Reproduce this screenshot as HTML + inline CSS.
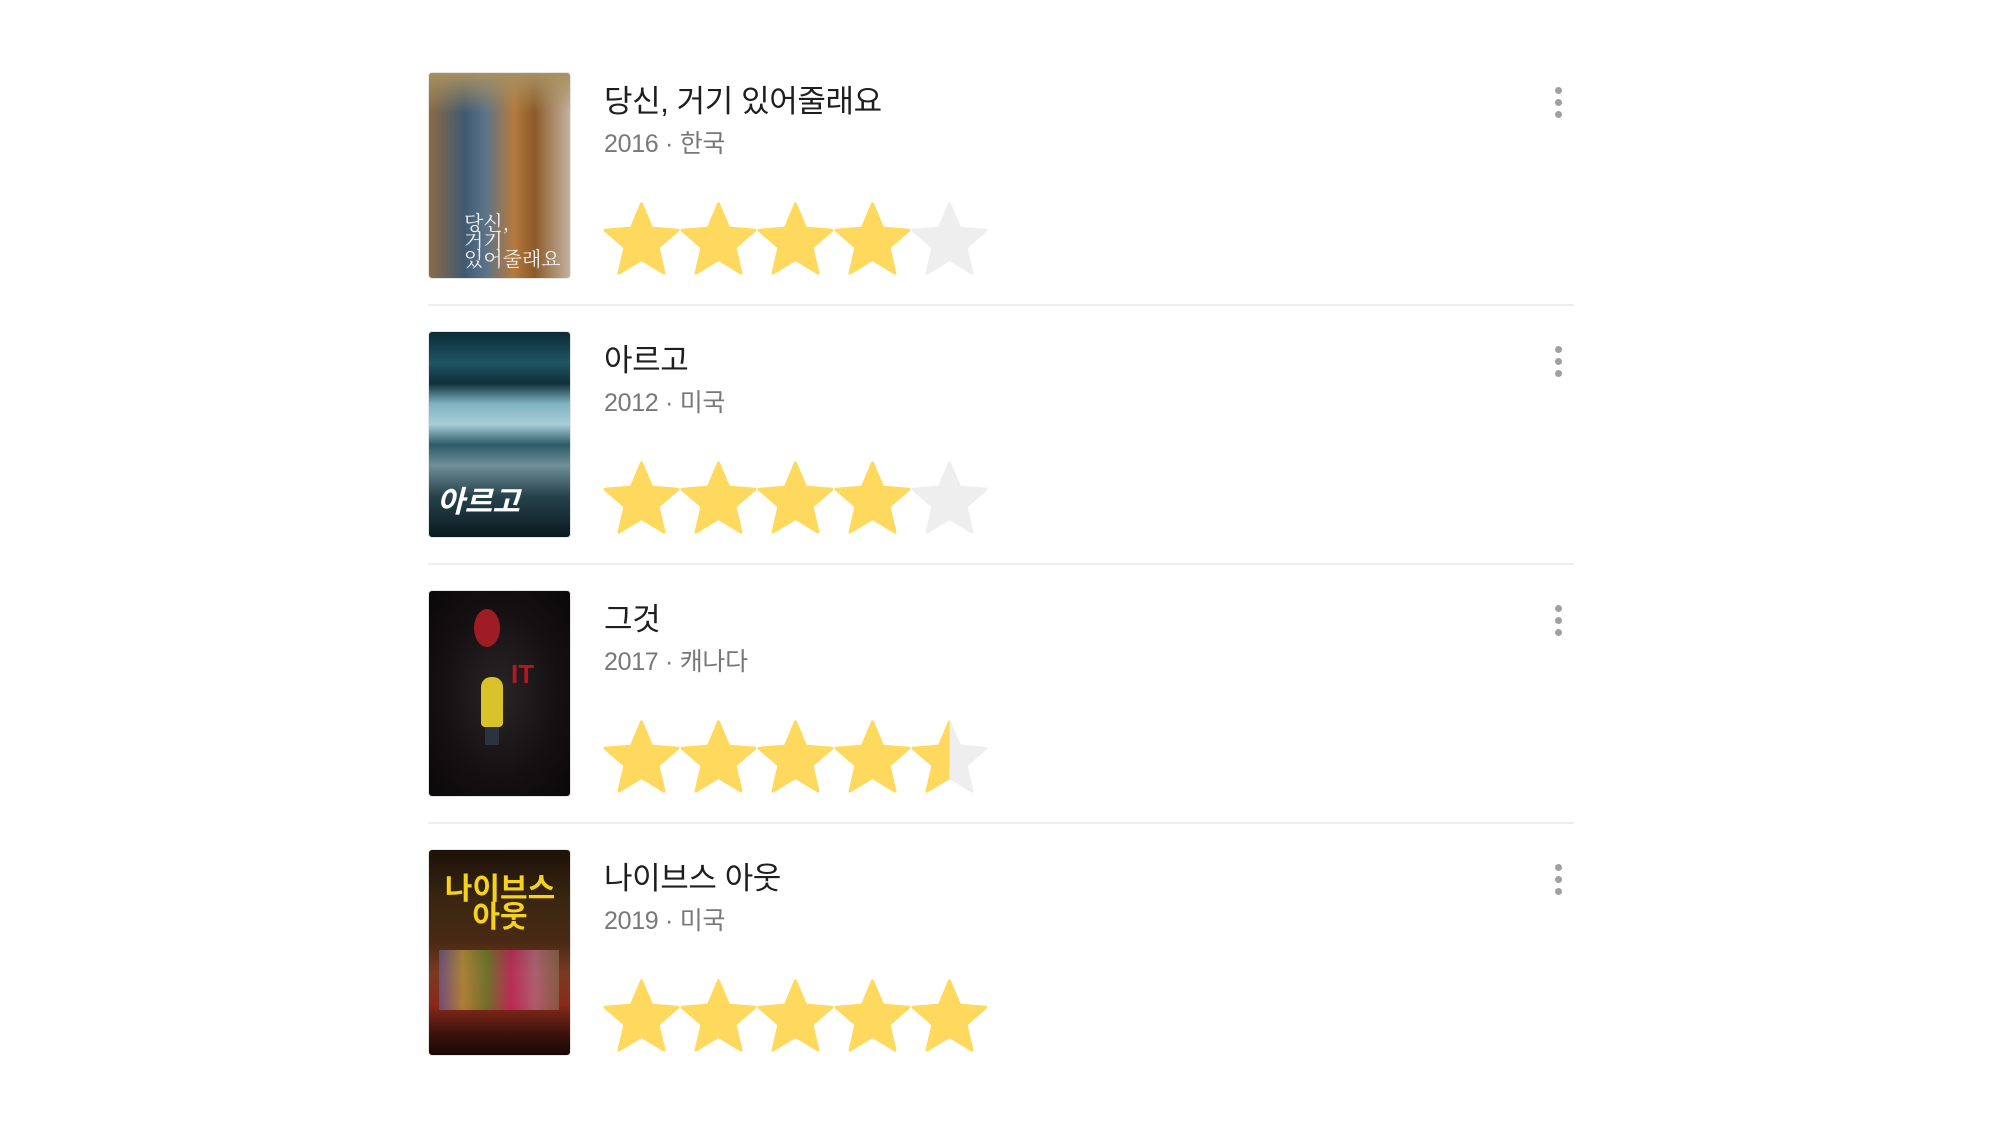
<!DOCTYPE html>
<html><head><meta charset="utf-8">
<style>
html,body{margin:0;padding:0;background:#fff;}
body{width:1999px;height:1125px;position:relative;overflow:hidden;font-family:"Liberation Sans","Noto Sans CJK KR",sans-serif;}
.row{position:absolute;left:0;width:1999px;height:259px;}
.poster{position:absolute;left:428px;top:72px;width:143px;height:207px;border-radius:4px;border:1px solid #e6e6e6;box-sizing:border-box;overflow:hidden;}
.title{position:absolute;left:604px;top:82px;font-size:31px;color:#1e1e1e;line-height:40px;letter-spacing:-0.4px;white-space:nowrap;}
.sub{position:absolute;left:604px;top:127px;font-size:25px;color:#787878;line-height:34px;letter-spacing:-0.3px;white-space:nowrap;}
.stars{position:absolute;left:603px;top:202px;height:72px;}
.stars svg{position:absolute;top:0;width:77px;height:73px;}
.dots{position:absolute;left:1555px;top:87px;width:7px;}
.dots i{display:block;width:7px;height:7px;border-radius:50%;background:#a0a0a0;margin-bottom:5px;}
.div{position:absolute;left:428px;top:304px;width:1146px;height:2px;background:#eeeeee;}
</style></head><body>

<svg width="0" height="0" style="position:absolute">
<defs>
<path id="st" d="M12 2 L14.81 8.63 L22 9.24 L16.54 13.97 L18.18 21 L12 17.27 L5.82 21 L7.46 13.97 L2 9.24 L9.19 8.63 Z"/>
</defs>
</svg>

<!-- Row 1 -->
<div class="row" style="top:0">
<div class="poster" style="background:linear-gradient(90deg,#8b6b45 0%,#3f5a72 25%,#5b7389 40%,#b57a3d 60%,#8d5a2a 75%,#c4b3a0 100%);">
<div style="position:absolute;left:0;top:0;width:100%;height:40px;background:linear-gradient(#a89060,rgba(160,140,100,0));"></div>
<div style="position:absolute;left:35px;top:140px;color:#eee;font-size:20px;line-height:18px;font-family:'Noto Serif CJK SC',serif;">당신,<br>거기<br>있어줄래요</div>
</div>
<div class="title">당신, 거기 있어줄래요</div>
<div class="sub">2016 · 한국</div>
<div class="stars">
<svg viewBox="1.5 1.5 21 20" style="left:0"><use href="#st" fill="#ffd95e" stroke="#ffd95e" stroke-width="0.8" stroke-linejoin="round"/></svg>
<svg viewBox="1.5 1.5 21 20" style="left:77px"><use href="#st" fill="#ffd95e" stroke="#ffd95e" stroke-width="0.8" stroke-linejoin="round"/></svg>
<svg viewBox="1.5 1.5 21 20" style="left:154px"><use href="#st" fill="#ffd95e" stroke="#ffd95e" stroke-width="0.8" stroke-linejoin="round"/></svg>
<svg viewBox="1.5 1.5 21 20" style="left:231px"><use href="#st" fill="#ffd95e" stroke="#ffd95e" stroke-width="0.8" stroke-linejoin="round"/></svg>
<svg viewBox="1.5 1.5 21 20" style="left:308px"><use href="#st" fill="#eeeeee" stroke="#eeeeee" stroke-width="0.8" stroke-linejoin="round"/></svg>
</div>
<div class="dots"><i></i><i></i><i></i></div>
<div class="div"></div>
</div>

<!-- Row 2 -->
<div class="row" style="top:259px">
<div class="poster" style="background:linear-gradient(180deg,#0c2a36 0%,#1e5664 15%,#0f2f3a 25%,#7fb3c2 35%,#a8cdd8 45%,#2c5b68 55%,#6f8f98 65%,#27434d 80%,#0a1a20 100%);">
<div style="position:absolute;left:8px;top:145px;color:#fff;font-weight:bold;font-style:italic;font-size:30px;">아르고</div>
</div>
<div class="title">아르고</div>
<div class="sub">2012 · 미국</div>
<div class="stars">
<svg viewBox="1.5 1.5 21 20" style="left:0"><use href="#st" fill="#ffd95e" stroke="#ffd95e" stroke-width="0.8" stroke-linejoin="round"/></svg>
<svg viewBox="1.5 1.5 21 20" style="left:77px"><use href="#st" fill="#ffd95e" stroke="#ffd95e" stroke-width="0.8" stroke-linejoin="round"/></svg>
<svg viewBox="1.5 1.5 21 20" style="left:154px"><use href="#st" fill="#ffd95e" stroke="#ffd95e" stroke-width="0.8" stroke-linejoin="round"/></svg>
<svg viewBox="1.5 1.5 21 20" style="left:231px"><use href="#st" fill="#ffd95e" stroke="#ffd95e" stroke-width="0.8" stroke-linejoin="round"/></svg>
<svg viewBox="1.5 1.5 21 20" style="left:308px"><use href="#st" fill="#eeeeee" stroke="#eeeeee" stroke-width="0.8" stroke-linejoin="round"/></svg>
</div>
<div class="dots"><i></i><i></i><i></i></div>
<div class="div"></div>
</div>

<!-- Row 3 -->
<div class="row" style="top:518px">
<div class="poster" style="background:radial-gradient(ellipse at 50% 50%,#2a2426 0%,#141012 60%,#0a0809 100%);">
<div style="position:absolute;left:45px;top:18px;width:26px;height:38px;border-radius:50%;background:#a01c24;"></div>
<div style="position:absolute;left:52px;top:86px;width:22px;height:50px;border-radius:10px 10px 4px 4px;background:#d9c22a;"></div>
<div style="position:absolute;left:56px;top:136px;width:14px;height:18px;background:#2c3340;"></div>
<div style="position:absolute;left:82px;top:68px;color:#b21822;font-size:26px;font-weight:bold;">IT</div>
</div>
<div class="title">그것</div>
<div class="sub">2017 · 캐나다</div>
<div class="stars">
<svg viewBox="1.5 1.5 21 20" style="left:0"><use href="#st" fill="#ffd95e" stroke="#ffd95e" stroke-width="0.8" stroke-linejoin="round"/></svg>
<svg viewBox="1.5 1.5 21 20" style="left:77px"><use href="#st" fill="#ffd95e" stroke="#ffd95e" stroke-width="0.8" stroke-linejoin="round"/></svg>
<svg viewBox="1.5 1.5 21 20" style="left:154px"><use href="#st" fill="#ffd95e" stroke="#ffd95e" stroke-width="0.8" stroke-linejoin="round"/></svg>
<svg viewBox="1.5 1.5 21 20" style="left:231px"><use href="#st" fill="#ffd95e" stroke="#ffd95e" stroke-width="0.8" stroke-linejoin="round"/></svg>
<svg viewBox="1.5 1.5 21 20" style="left:308px"><defs><clipPath id="h"><rect x="0" y="0" width="12" height="24"/></clipPath></defs><use href="#st" fill="#eeeeee" stroke="#eeeeee" stroke-width="0.8" stroke-linejoin="round"/><use href="#st" fill="#ffd95e" stroke="#ffd95e" stroke-width="0.8" stroke-linejoin="round" clip-path="url(#h)"/></svg>
</div>
<div class="dots"><i></i><i></i><i></i></div>
<div class="div"></div>
</div>

<!-- Row 4 -->
<div class="row" style="top:777px">
<div class="poster" style="background:linear-gradient(180deg,#1c1208 0%,#3a2612 25%,#4a2a14 45%,#7a3a22 60%,#8a2a1c 75%,#3a120c 90%,#1a0806 100%);">
<div style="position:absolute;left:12px;top:26px;color:#f6d21a;font-weight:bold;font-size:30px;line-height:28px;text-align:center;width:118px;">나이브스<br>아웃</div>
<div style="position:absolute;left:10px;top:100px;width:120px;height:60px;background:linear-gradient(90deg,#6a5aa0,#c0a040,#6a8a30,#d02a6a,#c07090,#8a6a50);opacity:.7;"></div>
</div>
<div class="title">나이브스 아웃</div>
<div class="sub">2019 · 미국</div>
<div class="stars">
<svg viewBox="1.5 1.5 21 20" style="left:0"><use href="#st" fill="#ffd95e" stroke="#ffd95e" stroke-width="0.8" stroke-linejoin="round"/></svg>
<svg viewBox="1.5 1.5 21 20" style="left:77px"><use href="#st" fill="#ffd95e" stroke="#ffd95e" stroke-width="0.8" stroke-linejoin="round"/></svg>
<svg viewBox="1.5 1.5 21 20" style="left:154px"><use href="#st" fill="#ffd95e" stroke="#ffd95e" stroke-width="0.8" stroke-linejoin="round"/></svg>
<svg viewBox="1.5 1.5 21 20" style="left:231px"><use href="#st" fill="#ffd95e" stroke="#ffd95e" stroke-width="0.8" stroke-linejoin="round"/></svg>
<svg viewBox="1.5 1.5 21 20" style="left:308px"><use href="#st" fill="#ffd95e" stroke="#ffd95e" stroke-width="0.8" stroke-linejoin="round"/></svg>
</div>
<div class="dots"><i></i><i></i><i></i></div>
</div>

</body></html>
